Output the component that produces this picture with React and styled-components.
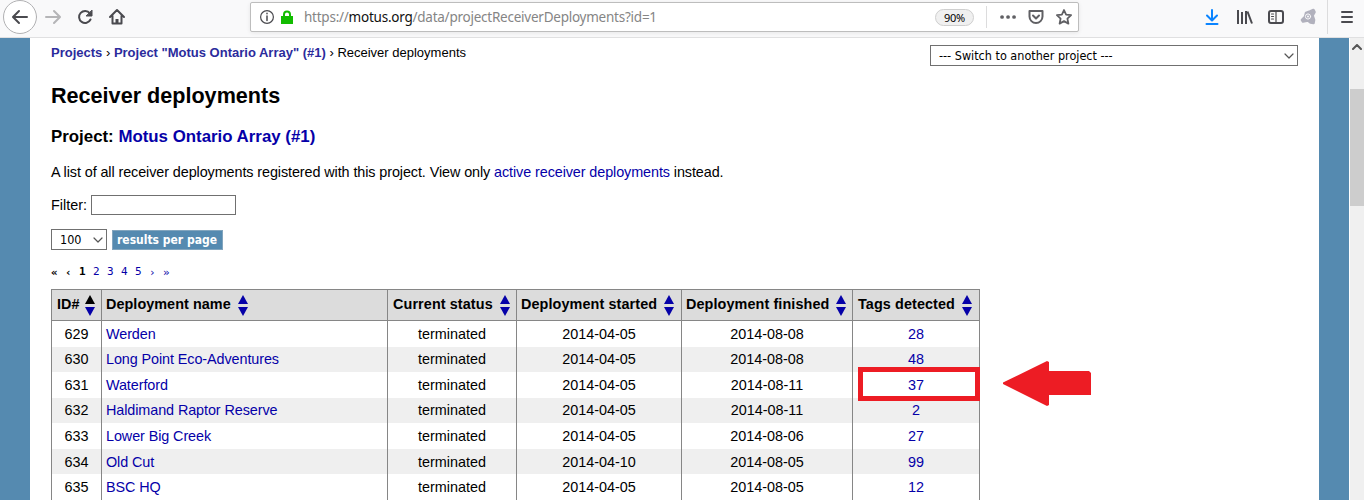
import React from "react";
import styled, { createGlobalStyle } from "styled-components";

const GlobalStyle = createGlobalStyle`
  * { box-sizing: border-box; }
  html, body { margin: 0; height: 500px; overflow: hidden; background: #fff; }
  body { font-family: "Liberation Sans", Arial, sans-serif; font-size: 14.4px; color: #000; }
`;

const Window = styled.div`
  display: flex;
  flex-direction: column;
  width: 1364px;
  height: 500px;
  overflow: hidden;
`;

/* ---------- browser toolbar ---------- */
const Toolbar = styled.header`
  display: flex;
  flex: none;
  height: 38px;
  background: #f9f9fa;
  border-bottom: 1px solid #e0e0e1;
`;

const NavButtons = styled.div`
  display: flex;
  width: 250px;
  height: 34px;
`;

const IconSvg = styled.svg`
  display: block;
  flex: none;
  fill: none;
  stroke: ${(p) => p.$color || "#4a4a4f"};
  stroke-width: ${(p) => p.$weight || 2};
  stroke-linecap: round;
  stroke-linejoin: round;
  margin: ${(p) => p.$margin || "0"};
`;

const AddressBar = styled.div`
  display: flex;
  width: 829px;
  height: 30px;
  margin-top: 2px;
  background: #fff;
  border: 1px solid #bdbdbd;
  border-radius: 2px;
  box-shadow: 0 1px 4px rgba(0, 0, 0, 0.08);
`;

const Url = styled.div`
  width: 631px;
  margin-left: 11px;
  font: 13.5px/28px "Noto Sans", "Open Sans", sans-serif;
  letter-spacing: -0.24px;
  white-space: nowrap;
  color: #858585;
`;

const Domain = styled.span`
  color: #111;
`;

const Zoom = styled.div`
  width: 39px;
  height: 17px;
  margin-top: 6px;
  border: 1px solid #cfcfcf;
  border-radius: 9px;
  background: #f0f0f0;
  font: 11px/15px "Noto Sans", sans-serif;
  letter-spacing: -0.3px;
  text-align: center;
`;

const Divider = styled.div`
  width: 1px;
  height: ${(p) => p.$height}px;
  margin: ${(p) => p.$margin};
  background: #dcdcdd;
`;

/* ---------- page ---------- */
const Viewport = styled.div`
  display: flex;
  flex: 1;
  min-height: 0;
`;

const Page = styled.main`
  width: 1349px;
  padding: 0 30px;
  background: #558ab0;
`;

const Content = styled.div`
  height: 100%;
  padding: 0 21px;
  background: #fff;
`;

const Scrollbar = styled.div`
  width: 15px;
  padding-top: 6px;
  border-left: 1px solid #fff;
  background: #f0f0f0;
`;

const Thumb = styled.div`
  height: 117px;
  margin-top: 39px;
  background: #cdcdcd;
`;

const TopRow = styled.div`
  display: flex;
  justify-content: space-between;
  height: 46px;
`;

const Breadcrumb = styled.nav`
  padding-top: 6px;
  line-height: 17px;
  font-size: 13px;
  white-space: pre;
`;

const Link = styled.a`
  color: ${(p) => (p.$crumb ? "#2b2b9c" : "#0500a8")};
  font-weight: ${(p) => (p.$crumb ? 700 : "inherit")};
`;

const Select = styled.div`
  display: flex;
  justify-content: space-between;
  width: ${(p) => p.$width}px;
  height: 21px;
  padding: 0 3px 0 8px;
  border: 1px solid #707070;
  background: #fff;
  font: 12.5px/20px "DejaVu Sans Condensed", "DejaVu Sans", sans-serif;
  white-space: pre;
`;

const ProjectSelect = styled(Select)`
  margin-top: 7px;
`;

const Title = styled.h1`
  margin: 0;
  height: 42px;
  font-size: 21.6px;
  line-height: 24px;
`;

const Subtitle = styled.h2`
  margin: 0;
  height: 37px;
  font-size: 16.85px;
  line-height: 22px;
`;

const Intro = styled.p`
  margin: 0;
  height: 32px;
  line-height: 18px;
  letter-spacing: -0.093px;
`;

const FilterRow = styled.label`
  display: flex;
  gap: 4px;
  height: 34px;
  line-height: 20px;
`;

const FilterInput = styled.input`
  width: 145px;
  height: 20px;
  padding: 0;
  border: 1px solid #707070;
`;

const PagerControls = styled.div`
  display: flex;
  gap: 5px;
  height: 35px;
`;

const Button = styled.button`
  width: 111px;
  height: 20px;
  margin-top: 1px;
  padding: 0 1px 0 0;
  border: 1px solid #82a5be;
  background: #558ab0;
  color: #fff;
  font: bold 12px/17px "DejaVu Sans Condensed", "DejaVu Sans", sans-serif;
  white-space: nowrap;
`;

const Pages = styled.div`
  display: flex;
  height: 25px;
  font: 11px/15px "DejaVu Sans Mono", monospace;
`;

const PageItem = styled.span`
  width: 14px;
  color: ${(p) => (p.$off ? "#000" : "#0500a8")};
  font-weight: ${(p) => (p.$off ? 700 : 400)};
  line-height: ${(p) => (p.$arrow ? 17 : 15)}px;
`;

const Table = styled.div`
  width: 929px;
  border-right: 1px solid #868686;
`;

const Row = styled.div`
  display: grid;
  grid-template-columns: 50px 286px 129px 165px 171px 127px;
  height: ${(p) => p.$height}px;
  line-height: ${(p) => p.$line}px;
  background: ${(p) => (p.$shaded ? "#efefef" : "#fff")};
`;

const HeaderRow = styled(Row)`
  height: 32px;
  background: #dcdcdc;
  border: solid #868686;
  border-width: 1px 0;
`;

const HeaderCell = styled.div`
  display: flex;
  gap: ${(p) => p.$gap}px;
  padding-left: ${(p) => p.$indent}px;
  border-left: 1px solid #868686;
  font-weight: 700;
  line-height: 29px;
  white-space: nowrap;
  letter-spacing: ${(p) => p.$spacing}px;
`;

const Cell = styled.div`
  position: relative;
  padding-left: ${(p) => (p.$left ? "4px" : "0")};
  border-left: 1px solid #868686;
  text-align: ${(p) => (p.$left ? "left" : "center")};
  letter-spacing: ${(p) => (p.$left ? "-0.09px" : "0")};
`;

const Highlight = styled.div`
  position: absolute;
  left: 5px;
  top: -5px;
  width: 122px;
  height: 34px;
  border: 5px solid #ed1c24;
`;

const Pointer = styled.svg`
  position: absolute;
  left: 150px;
  top: -11px;
`;

const Chevron = ({ margin, up }) => (
  <IconSvg width="10" height="6" viewBox="0 0 10 6" $color="#555" $weight={up ? 2 : 1.2} $margin={margin}>
    <path d={up ? "M1 5l4-4 4 4" : "M1 1l4 4 4-4"} />
  </IconSvg>
);

const Sort = ({ active }) => (
  <IconSvg width="10" height="21" viewBox="0 0 10 21" $color="none" $margin="5px 0 0">
    <path d="M5 0l5 9H0z" fill={active ? "#000" : "#0500a8"} />
    <path d="M0 12h10l-5 9z" fill="#0500a8" />
  </IconSvg>
);

const columns = [
  { name: "ID#", indent: 5, gap: 6, spacing: 0 },
  { name: "Deployment name", indent: 4, gap: 7, spacing: 0.05 },
  { name: "Current status", indent: 5, gap: 7, spacing: 0.1 },
  { name: "Deployment started", indent: 4, gap: 7, spacing: 0.1 },
  { name: "Deployment finished", indent: 4, gap: 7, spacing: 0.1 },
  { name: "Tags detected", indent: 5, gap: 7, spacing: 0.1 },
];

const deployments = [
  [629, "Werden", "2014-04-05", "2014-08-08", 28, 26, 26],
  [630, "Long Point Eco-Adventures", "2014-04-05", "2014-08-08", 48, 25, 24],
  [631, "Waterford", "2014-04-05", "2014-08-11", 37, 26, 26],
  [632, "Haldimand Raptor Reserve", "2014-04-05", "2014-08-11", 2, 25, 24],
  [633, "Lower Big Creek", "2014-04-05", "2014-08-06", 27, 26, 26],
  [634, "Old Cut", "2014-04-10", "2014-08-05", 99, 25, 26],
  [635, "BSC HQ", "2014-04-05", "2014-08-05", 12, 26, 26],
];

const BrowserToolbar = () => (
  <Toolbar>
    <NavButtons>
      <IconSvg width="132" height="34" viewBox="0 0 132 34">
        <circle cx="20" cy="17" r="16.5" fill="#fff" stroke="#b1b1b3" strokeWidth="1" />
        <path d="M27 17H13.5M19 11l-6 6 6 6" />
        <path d="M46 17h13.5M54 11l6 6-6 6" stroke="#b5b5b7" />
        <path d="M89.8 13.2A6 6 0 1 0 90.500 19.500" />
        <path d="M92 10.500v5.500h-5.500z" fill="#4a4a4f" strokeWidth="1" />
        <path d="M110 17l7-7 7 7M112.500 16v7.500h9V16" />
        <path d="M117 23v-4" strokeWidth="3" strokeLinecap="butt" />
      </IconSvg>
    </NavButtons>
    <AddressBar>
      <IconSvg width="42" height="28" viewBox="0 0 42 28" $weight="1.2">
        <circle cx="16" cy="14" r="6.4" />
        <path d="M16 13v4.400M16 10.300v.5" strokeWidth="1.5" />
        <path d="M30 13h12v8H30z" fill="#12bc00" stroke="none" />
        <path d="M33 14v-2.500a3 3 0 0 1 6 0V14" stroke="#12bc00" strokeWidth="2" />
      </IconSvg>
      <Url>https://<Domain>motus.org</Domain>/data/projectReceiverDeployments?id=1</Url>
      <Zoom>90%</Zoom>
      <Divider $height={22} $margin="3px 0 0 12px" />
      <IconSvg width="90" height="28" viewBox="0 0 90 28" $color="#606064">
        <path d="M15 14h.1M21 14h.1M27 14h.1" strokeWidth="3.7" />
        <path d="M42.500 8h13v5.500a6.500 6.500 0 0 1-13 0zM46 12.500l3 3 3-3" />
        <path d="M77 7l2.100 4.600 5 .6-3.700 3.400 1 5-4.400-2.500-4.400 2.500 1-5-3.700-3.400 5-.6z" strokeWidth="1.8" />
      </IconSvg>
    </AddressBar>
    <IconSvg width="248" height="34" viewBox="1079 0 248 34">
      <path d="M1212 10v10M1207 15.500l5 5 5-5M1206.500 24h11" stroke="#0a84ff" />
      <g strokeLinecap="butt">
        <path d="M1238 10v14M1242 12v12M1246 11v13" />
        <path d="M1247.500 11.500l4.500 12" />
      </g>
      <rect x="1269" y="11" width="14" height="12" rx="2" />
      <path d="M1276 11v12M1271.500 14h2M1271.500 16.500h2M1271.500 19h2" strokeWidth="1.2" />
      <path d="M1306 13l4-1.500 3.500-1.500 1 2-2 3.500 1.500 4.500-.5 3-3-.5-2.500-2-5 1-1-1.500 3-3z" fill="#b1b1bd" stroke="#b1b1bd" strokeWidth="2.6" />
      <circle cx="1308" cy="16.500" r="2.600" stroke="#f9f9fa" strokeWidth="1" />
      <circle cx="1308" cy="16.500" r="1" fill="#f9f9fa" stroke="none" />
    </IconSvg>
    <Divider $height={34} $margin="0" />
    <IconSvg width="36" height="34" viewBox="1328 0 36 34">
      <path d="M1342 12h10M1342 17h10M1342 22h10" />
    </IconSvg>
  </Toolbar>
);

const DeploymentTable = () => (
  <Table>
    <HeaderRow>
      {columns.map(({ name, indent, gap, spacing }, i) => (
        <HeaderCell key={name} $indent={indent} $gap={gap} $spacing={spacing}>
          {name}
          <Sort active={i === 0} />
        </HeaderCell>
      ))}
    </HeaderRow>
    {deployments.map(([id, name, started, finished, tags, height, line], i) => (
      <Row key={id} $height={height} $line={line} $shaded={i % 2 === 1}>
        <Cell>{id}</Cell>
        <Cell $left><Link>{name}</Link></Cell>
        <Cell>terminated</Cell>
        <Cell>{started}</Cell>
        <Cell>{finished}</Cell>
        <Cell>
          <Link>{tags}</Link>
          {id === 631 && (
            <>
              <Highlight />
              <Pointer width="90" height="45" viewBox="0 0 90 45">
                <path d="M0 21.500L42 1l2-1 2 1v9h40l2 2v22H46v10l-2 1-2-1L0 23z" fill="#ed1c24" />
              </Pointer>
            </>
          )}
        </Cell>
      </Row>
    ))}
  </Table>
);

export default function App() {
  return (
    <Window>
      <GlobalStyle />
      <BrowserToolbar />
      <Viewport>
        <Page>
          <Content>
            <TopRow>
              <Breadcrumb>
                <Link $crumb>Projects</Link> › <Link $crumb>Project "Motus Ontario Array" (#1)</Link> › Receiver deployments
              </Breadcrumb>
              <ProjectSelect $width={368}>
                --- Switch to another project ---
                <Chevron margin="7px 0 0" />
              </ProjectSelect>
            </TopRow>
            <Title>Receiver deployments</Title>
            <Subtitle>Project: <Link>Motus Ontario Array (#1)</Link></Subtitle>
            <Intro>
              A list of all receiver deployments registered with this project. View only <Link>active receiver deployments</Link> instead.
            </Intro>
            <FilterRow>Filter: <FilterInput /></FilterRow>
            <PagerControls>
              <Select $width={56}>100<Chevron margin="7px 0 0" /></Select>
              <Button>results per page</Button>
            </PagerControls>
            <Pages>
              <PageItem $off $arrow>«</PageItem>
              <PageItem $off $arrow>‹</PageItem>
              <PageItem $off>1</PageItem>
              {["2", "3", "4", "5", "›", "»"].map((label, i) => (
                <PageItem key={label} $arrow={i > 3}>{label}</PageItem>
              ))}
            </Pages>
            <DeploymentTable />
          </Content>
        </Page>
        <Scrollbar>
          <Chevron up margin="0 0 0 2px" />
          <Thumb />
        </Scrollbar>
      </Viewport>
    </Window>
  );
}
